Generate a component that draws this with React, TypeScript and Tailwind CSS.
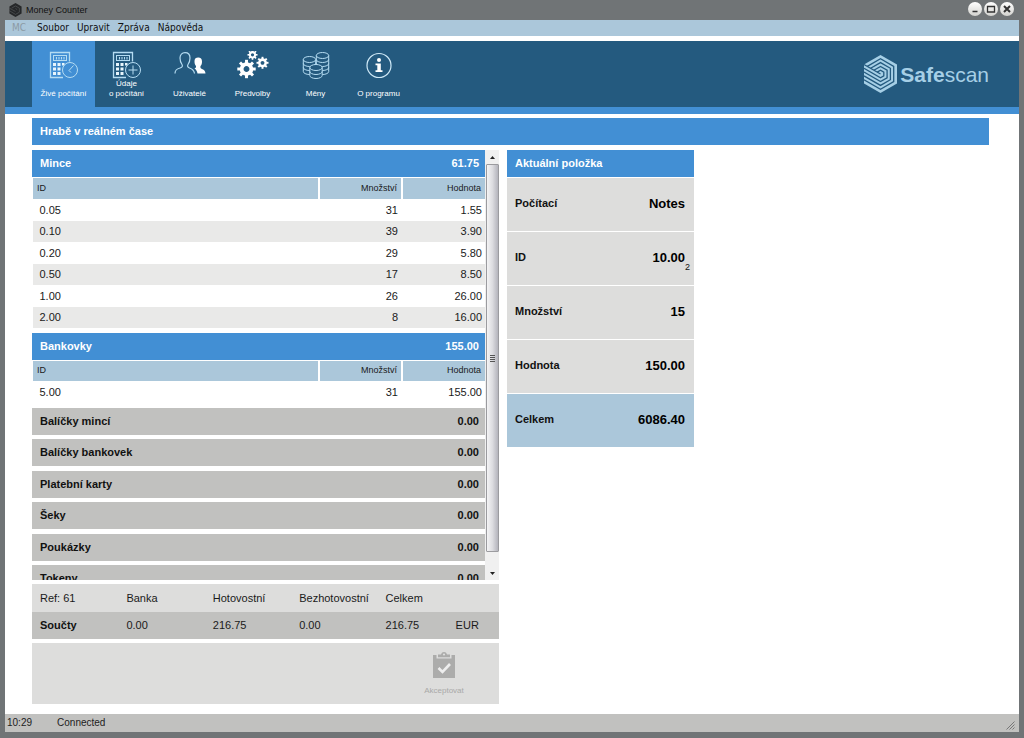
import React from "react";
import clsx from "clsx";

type Row = { id: string; qty: number; value: string };

const coins: Row[] = [
  { id: "0.05", qty: 31, value: "1.55" },
  { id: "0.10", qty: 39, value: "3.90" },
  { id: "0.20", qty: 29, value: "5.80" },
  { id: "0.50", qty: 17, value: "8.50" },
  { id: "1.00", qty: 26, value: "26.00" },
  { id: "2.00", qty: 8, value: "16.00" },
];

const notes: Row[] = [{ id: "5.00", qty: 31, value: "155.00" }];

const closedSections = ["Balíčky mincí", "Balíčky bankovek", "Platební karty", "Šeky", "Poukázky", "Tokeny"];

const currentItem = [
  { label: "Počítací", value: "Notes" },
  { label: "ID", value: "10.00", sub: "2" },
  { label: "Množství", value: "15" },
  { label: "Hodnota", value: "150.00" },
];

function Calculator({ children }: { children: React.ReactNode }) {
  return (
    <svg className="w-[30px] h-[30px]" viewBox="0 0 30 30" fill="none" stroke="#b5dcf2">
      <path d="M14 26.5H1.5V1.5H20.500V10.500" strokeWidth="1.3" />
      <rect x="4.500" y="4.500" width="13" height="5" />
      <path d="M7.500 8.500V6M10 8.500V6M12.500 8.500V6M15 8.500V6" strokeWidth="1.100" />
      <g fill="#e8f5fc" stroke="none">
        <rect x="4" y="12" width="3" height="3" />
        <rect x="8.500" y="12" width="3" height="3" />
        <rect x="13" y="12" width="2.500" height="2.500" />
        <rect x="4" y="16.500" width="3" height="3" />
        <rect x="8.500" y="16.500" width="3" height="3" />
        <rect x="4" y="21" width="3" height="3" />
        <rect x="8.500" y="21" width="3" height="3" />
      </g>
      <circle cx="21" cy="19" r="7.500" />
      {children}
    </svg>
  );
}

function UsersIcon() {
  return (
    <svg className="w-[32px] h-[30px]" viewBox="0 0 32 30" fill="none">
      <path
        d="M1 22.500C1 19 2.500 18 6 17C8.500 16.200 8.800 15 8 13.500C6.500 11.500 6 9.500 6 7C6 3.800 8 1.700 11 1.700S16 3.800 16 7C16 9.500 15.500 11.500 14 13.500C13.200 15 13.500 16.200 15.500 17C18.500 18 20 19 20.500 22.500"
        stroke="#b5dcf2"
        strokeWidth="1.200"
      />
      <path
        d="M20.500 10C20.500 7.500 22 6.500 24.200 6.500C26.700 6.500 28 8 28 10.500C28 12.500 27.500 14 26.500 15C26.200 16.500 26.500 17.500 28 18C30.500 19 31.300 20 31.500 22.500H23.500C23 20 22 18.500 20.500 17.500C22 17 22.500 16 21.800 14.800C20.800 13.500 20.500 12 20.500 10Z"
        fill="#fff"
      />
    </svg>
  );
}

function Gear({ cx, cy, r }: { cx: number; cy: number; r: number }) {
  return (
    <g transform={`translate(${cx} ${cy})`}>
      <circle r={r * 0.53} fill="none" stroke="#fff" strokeWidth={r * 0.42} />
      {[0, 45, 90, 135, 180, 225, 270, 315].map((a) => (
        <rect key={a} x={-r * 0.16} y={-r} width={r * 0.32} height={r * 0.4} fill="#fff" transform={`rotate(${a})`} />
      ))}
    </g>
  );
}

function GearsIcon() {
  return (
    <svg className="w-[32px] h-[30px]" viewBox="0 0 32 30">
      <Gear cx={9.5} cy={18} r={9.2} />
      <Gear cx={15.5} cy={3.8} r={5} />
      <Gear cx={25.5} cy={11.8} r={6} />
    </svg>
  );
}

function CoinStack({ x, y, n, rx }: { x: number; y: number; n: number; rx: number }) {
  const bottom = y + n * 4;
  return (
    <g transform={`translate(${x} 0)`}>
      <path
        d={`M${-rx} ${y}V${bottom}A${rx} 3 0 0 0 ${rx} ${bottom}V${y}A${rx} 3 0 0 0 ${-rx} ${y}Z`}
        className="fill-[#245a7f]"
      />
      {Array.from({ length: n - 1 }, (_, i) => (
        <path key={i} d={`M${-rx} ${y + 4 * (i + 1)}A${rx} 3 0 0 0 ${rx} ${y + 4 * (i + 1)}`} />
      ))}
      <path d={`M${-rx} ${y}A${rx} 3 0 0 0 ${rx} ${y}`} />
    </g>
  );
}

function CoinsIcon() {
  return (
    <svg className="w-[28px] h-[30px]" viewBox="0 0 28 30" fill="none" stroke="#b5dcf2">
      <CoinStack x={20.5} y={4.5} n={4} rx={6.2} />
      <CoinStack x={7.5} y={8.5} n={3} rx={6.2} />
      <CoinStack x={14} y={16.5} n={2} rx={6.2} />
    </svg>
  );
}

function InfoIcon() {
  return (
    <svg className="w-[28px] h-[30px]" viewBox="0 0 28 30">
      <circle cx="14" cy="14.500" r="12" fill="none" stroke="#cfe9f7" strokeWidth="1.200" />
      <circle cx="14" cy="9" r="2" fill="#fff" />
      <path d="M10.500 12.500H15.800V19.300H17.500V21H10.500V19.300H12.300V14.200H10.500Z" fill="#fff" />
    </svg>
  );
}

function SafescanMark() {
  return (
    <svg className="w-[33px] h-[38px]" viewBox="0 0 33 38">
      <path d="M16.500 0L33 9.500V28.500L16.500 38L0 28.500V9.500Z" fill="#a6cfe6" />
      <g fill="none" stroke="#245a7f" strokeWidth="1.300">
        <path d="M3.300 11.400L16.500 3.800L29.700 11.400V26.600L16.500 34.200L0 24.700" />
        <path d="M6.600 13.300L16.500 7.600L26.400 13.300V24.700L16.500 30.400L0 20.900" />
        <path d="M9.900 15.200L16.500 11.400L23.100 15.200V22.800L16.500 26.600L0 17.100" />
        <path d="M13.200 17.100L16.500 15.200L19.800 17.100V20.900L16.500 22.800L0 13.300" />
        <path d="M0 9.500L16.500 19" />
      </g>
    </svg>
  );
}

const tools = [
  {
    label: "Živé počítání",
    icon: (
      <Calculator>
        <path d="M24.500 14.500L20 19.500L22 21.500" />
      </Calculator>
    ),
  },
  {
    label: "Údaje\no počítání",
    icon: (
      <Calculator>
        <path d="M21 14.500V23.500M16.500 19H25.500" />
      </Calculator>
    ),
  },
  { label: "Uživatelé", icon: <UsersIcon /> },
  { label: "Předvolby", icon: <GearsIcon /> },
  { label: "Měny", icon: <CoinsIcon /> },
  { label: "O programu", icon: <InfoIcon /> },
];

function WindowButton({ label, children }: { label: string; children: React.ReactNode }) {
  return (
    <button
      aria-label={label}
      className="w-[14px] h-[14px] rounded-full bg-linear-to-b from-white to-[#d2d2ce] flex items-center justify-center"
    >
      <svg className="w-[10px] h-[10px]" viewBox="0 0 10 10" fill="none" stroke="#333">
        {children}
      </svg>
    </button>
  );
}

function TitleBar() {
  return (
    <header className="h-5 shrink-0 flex items-center justify-between pl-1">
      <div className="flex items-center gap-1 text-[9px] text-[#111]">
        <svg className="w-[13px] h-[14px]" viewBox="0 0 33 38">
          <path d="M16.500 0L33 9.500V28.500L16.500 38L0 28.500V9.500Z" fill="#26282a" />
          <g fill="none" stroke="#5f6365" strokeWidth="1.500">
            <path d="M6 14L16.500 8L27 14V25L16.500 31L0 21M0 14L16.500 23M16.500 15L21 18" />
          </g>
        </svg>
        <h1>Money Counter</h1>
      </div>
      <div className="flex gap-[2px] pr-[5px] pb-[2px]">
        <WindowButton label="Minimize">
          <path d="M2.500 7.500H7.500" strokeWidth="1.500" />
        </WindowButton>
        <WindowButton label="Maximize">
          <path d="M1.500 2.500H8.500V8H1.500Z" strokeWidth="1.300" />
        </WindowButton>
        <WindowButton label="Close">
          <path d="M2 2L8 8M8 2L2 8" strokeWidth="2" />
        </WindowButton>
      </div>
    </header>
  );
}

function SectionHeader({ title, total, open }: { title: string; total: string; open?: boolean }) {
  return (
    <button
      aria-expanded={!!open}
      className={clsx(
        "w-full h-[27px] shrink-0 flex items-center justify-between pl-2 pr-[6px] text-[11px] font-bold",
        open ? "bg-[#428fd4] text-white" : "bg-[#c1c1bf] text-[#111]"
      )}
    >
      <span>{title}</span>
      <span>{total}</span>
    </button>
  );
}

function CountTable({ rows }: { rows: Row[] }) {
  return (
    <table className="w-full table-fixed border-collapse text-[11px] text-[#1a1a1a]">
      <thead>
        <tr className="h-[21px] bg-[#abc7da] text-[9px] border-t border-white">
          <th className="p-0 pl-1 text-left font-normal border-l border-white">ID</th>
          <th className="w-[83px] p-0 pr-1 text-right font-normal border-l-2 border-white">Množství</th>
          <th className="w-[83px] p-0 pr-1 text-right font-normal border-l-2 border-white">Hodnota</th>
        </tr>
      </thead>
      <tbody>
        {rows.map((row) => (
          <tr key={row.id} className="h-[22px] even:h-[21px] bg-white even:bg-[#e9e9e8] leading-4">
            <td className="p-0 pl-[7px]">{row.id}</td>
            <td className="p-0 pr-1 text-right">{row.qty}</td>
            <td className="p-0 pr-[3px] text-right">{row.value}</td>
          </tr>
        ))}
      </tbody>
    </table>
  );
}

function ScrollBar() {
  return (
    <div className="w-[14px] shrink-0 flex flex-col bg-[#f0f0f0]">
      <button aria-label="Scroll up" className="h-[14px] flex items-center justify-center">
        <svg className="w-[5px] h-[3px]" viewBox="0 0 5 3">
          <path d="M0 3L2.500 0L5 3Z" fill="#222" />
        </svg>
      </button>
      <div className="flex-1 ml-px mb-[14px] border border-[#9b9b9f] rounded-[1px] bg-linear-to-r from-[#f4f4f5] via-[#dcdce0] to-[#b4b4bc] flex flex-col items-center justify-center gap-px">
        <span className="w-[5px] h-px bg-[#555]" />
        <span className="w-[5px] h-px bg-[#555]" />
        <span className="w-[5px] h-px bg-[#555]" />
        <span className="w-[5px] h-px bg-[#555]" />
      </div>
      <button aria-label="Scroll down" className="h-[14px] flex items-center justify-center">
        <svg className="w-[5px] h-[3px]" viewBox="0 0 5 3">
          <path d="M0 0L2.500 3L5 0Z" fill="#222" />
        </svg>
      </button>
    </div>
  );
}

function Totals() {
  return (
    <table className="w-full shrink-0 table-fixed border-collapse text-[11px] text-[#1a1a1a]">
      <thead>
        <tr className="h-[28px] bg-[#ddddDC]">
          <th className="w-[18.500%] p-0 pl-2 text-left font-normal">Ref: 61</th>
          <th className="w-[18.500%] p-0 pl-2 text-left font-normal">Banka</th>
          <th className="w-[18.500%] p-0 pl-2 text-left font-normal">Hotovostní</th>
          <th className="w-[18.500%] p-0 pl-2 text-left font-normal">Bezhotovostní</th>
          <th className="w-[15%] p-0 pl-2 text-left font-normal">Celkem</th>
          <td />
        </tr>
      </thead>
      <tbody>
        <tr className="h-[27px] bg-[#c1c1bf]">
          <th className="p-0 pl-2 text-left font-bold text-[#111]">Součty</th>
          <td className="p-0 pl-2">0.00</td>
          <td className="p-0 pl-2">216.75</td>
          <td className="p-0 pl-2">0.00</td>
          <td className="p-0 pl-2">216.75</td>
          <td className="p-0 pl-2">EUR</td>
        </tr>
      </tbody>
    </table>
  );
}

export default function App() {
  return (
    <div className="h-screen flex flex-col bg-[#707476] px-[5px] pb-[6px] font-['Liberation_Sans',Arial,sans-serif] leading-none">
      <TitleBar />

      <div className="flex-1 min-h-0 flex flex-col bg-white">
        <nav className="h-4 shrink-0 flex items-center gap-2 pl-[7px] bg-[#abc7da] text-[10px] text-[#111] font-['DejaVu_Sans_Condensed','DejaVu_Sans',sans-serif]">
          <button disabled className="mr-[3px] text-[#8b9aa4]">MC</button>
          <button>Soubor</button>
          <button>Upravit</button>
          <button>Zpráva</button>
          <button>Nápověda</button>
        </nav>

        <div className="mt-[5px] h-[73px] shrink-0 flex justify-between bg-[#245a7f] border-b-[7px] border-[#428fd4] pl-[27px] pr-[30px]">
          <div className="flex">
            {tools.map((tool, i) => (
              <button
                key={tool.label}
                className={clsx(
                  "w-[63px] flex flex-col items-center justify-between pt-[10px] pb-2 text-[8px] leading-[10px] text-white whitespace-pre",
                  i === 0 && "bg-[#428fd4]"
                )}
              >
                {tool.icon}
                <span className="-mt-1">{tool.label}</span>
              </button>
            ))}
          </div>
          <div className="flex items-center gap-[3px] text-[21px] text-[#a6cfe6]">
            <SafescanMark />
            <span>
              <b>Safe</b>scan
            </span>
          </div>
        </div>

        <main className="flex-1 min-h-0 flex flex-col pl-[27px] pr-[30px] pt-1 pb-[10px]">
          <h2 className="h-[27px] shrink-0 flex items-center pl-2 bg-[#428fd4] text-white text-[11px] font-bold">
            Hrabě v reálném čase
          </h2>

          <div className="mt-[5px] flex-1 min-h-0 grid grid-cols-[467fr_187fr_287fr] gap-2">
            <div className="min-h-0 flex flex-col gap-1">
              <div className="flex-1 min-h-0 flex">
                <div className="flex-1 flex flex-col overflow-hidden">
                  <SectionHeader title="Mince" total="61.75" open />
                  <CountTable rows={coins} />
                  <div className="mt-[5px]">
                    <SectionHeader title="Bankovky" total="155.00" open />
                  </div>
                  <CountTable rows={notes} />
                  <div className="mt-[5px]">
                    {closedSections.map((title) => (
                      <div key={title} className="mb-1 even:mb-[5px]">
                        <SectionHeader title={title} total="0.00" />
                      </div>
                    ))}
                  </div>
                </div>
                <ScrollBar />
              </div>
              <Totals />
              <div className="h-[61px] shrink-0 flex justify-end bg-[#dddddc] pr-[30px]">
                <button disabled className="w-[50px] flex flex-col items-center gap-[9px] pt-[9px] text-[8px] text-[#a9a9a8]">
                  <svg className="w-6 h-[26px]" viewBox="0 0 24 26">
                    <path
                      d="M1 3H4.500V6.500H19.500V3H23V26H1ZM6 2.500H9C9.500 0.800 10.500 0 12 0S14.500 0.800 15 2.500H18V5.200H6Z"
                      fill="#acacab"
                    />
                    <circle cx="12" cy="2.500" r="1.100" fill="#dddddc" />
                    <path d="M6.500 16L10.500 20L18 12" fill="none" stroke="#eee" strokeWidth="2.600" />
                  </svg>
                  Akceptovat
                </button>
              </div>
            </div>

            <section className="flex flex-col gap-px text-[11px] font-bold text-[#111]">
              <h3 className="h-[27px] flex items-center pl-2 bg-[#428fd4] text-white">Aktuální položka</h3>
              {currentItem.map((item) => (
                <div key={item.label} className="relative h-[53px] flex items-center justify-between pl-2 pr-[9px] pb-[2px] bg-[#dddddc]">
                  <span>{item.label}</span>
                  <span className="text-[13px] text-black">{item.value}</span>
                  {item.sub && <span className="absolute right-1 bottom-[13px] text-[9px] font-normal">{item.sub}</span>}
                </div>
              ))}
              <div className="h-[53px] flex items-center justify-between pl-2 pr-[9px] pb-[2px] bg-[#abc7da]">
                <span>Celkem</span>
                <span className="text-[13px] text-black">6086.40</span>
              </div>
            </section>
          </div>
        </main>

        <footer className="h-[18px] shrink-0 flex items-center gap-[25px] pl-[2px] pr-1 bg-[#c1c1bf] text-[10px] text-[#222]">
          <span>10:29</span>
          <span>Connected</span>
          <svg className="ml-auto mt-1 w-[9px] h-[9px]" viewBox="0 0 9 9" stroke="#777" fill="none">
            <path d="M0.500 8.500L8.500 0.500M3.500 8.500L8.500 3.500M6.500 8.500L8.500 6.500" />
          </svg>
        </footer>
      </div>
    </div>
  );
}
